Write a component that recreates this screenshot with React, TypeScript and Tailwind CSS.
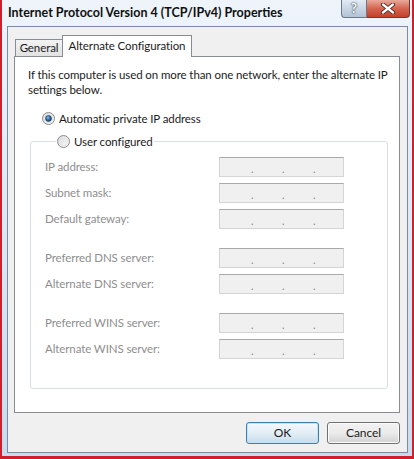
import React from 'react';

const FONT = "font-['Lato','Open_Sans',sans-serif]";

const Radio = ({ checked }: { checked?: boolean }) => (
  <svg width="13" height="13" viewBox="0 0 13 13" className="shrink-0">
    <defs>
      <linearGradient id="rb" x1="0" y1="0" x2="1" y2="1">
        <stop offset="0" stopColor="#d6d6d6" />
        <stop offset="1" stopColor="#ffffff" />
      </linearGradient>
      <radialGradient id="rd" cx="0.4" cy="0.35" r="0.7">
        <stop offset="0" stopColor="#8fc3ee" />
        <stop offset="0.5" stopColor="#2f6ea8" />
        <stop offset="1" stopColor="#1b3e63" />
      </radialGradient>
    </defs>
    <circle cx="6.5" cy="6.5" r="6" fill="url(#rb)" stroke="#8b8b8b" strokeWidth="1" />
    <circle cx="6.5" cy="6.5" r="4.3" fill="none" stroke="#e6e6e6" strokeWidth="1" />
    {checked && <circle cx="6.5" cy="6.5" r="3" fill="url(#rd)" stroke="#1d3550" strokeWidth="0.6" />}
  </svg>
);

const IpBox = () => (
  <div className="w-[125px] h-[20px] bg-[#f0f0f0] border border-[#d4d4d4] border-t-[#a9a9a9] flex items-center pl-[31px] gap-[28px] text-[#8a8a8a] text-[11px] leading-none">
    <span className="w-[3px] mt-[3px]">.</span>
    <span className="w-[3px] mt-[3px]">.</span>
    <span className="w-[3px] mt-[3px]">.</span>
  </div>
);

const Row = ({ label, className = '' }: { label: string; className?: string }) => (
  <div className={`flex items-center h-[20px] ${className}`}>
    <div className="w-[174px] text-[#8e8e8e] whitespace-nowrap">{label}</div>
    <IpBox />
  </div>
);

export default function App() {
  return (
    <div className={`w-[414px] h-[459px] bg-[#cf1f2c] pl-[2px] pr-[2px] pb-[3px] ${FONT} text-[11.5px] tracking-[-0.1px] text-[#1b1b1b]`}>
      <div className="h-full flex flex-col bg-gradient-to-b from-[#eef4fa] via-[#dce8f4] to-[#c9dbee] pl-[5px] pr-[4px] pb-[3px]">
        {/* title bar */}
        <div className="h-[26px] flex items-start justify-between">
          <div className="pt-[5px] pl-[1px] font-bold text-[12.5px] tracking-normal leading-[16px] text-[#101010] whitespace-nowrap">
            Internet Protocol Version 4 (TCP/IPv4) Properties
          </div>
          <div className="flex -mr-[2px]">
            <div className="w-[26px] h-[18px] rounded-bl-[4px] border border-t-0 border-[#6d7785] bg-gradient-to-b from-[#e3ebf4] via-[#c9d6e4] to-[#b3c3d6] flex items-center justify-center text-white font-bold text-[13px] leading-none [text-shadow:0_0_2px_#2b3a4d,0_0_1px_#2b3a4d]">
              ?
            </div>
            <div className="w-[43px] h-[18px] rounded-br-[4px] border border-t-0 border-l-0 border-[#6e3b33] bg-gradient-to-b from-[#e9a99b] via-[#d4644f] to-[#c2402a] flex items-center justify-center">
              <svg width="14" height="11" viewBox="0 0 14 11">
                <path d="M2 1.5 L12 9.5 M12 1.5 L2 9.5" stroke="#3b1a14" strokeWidth="4" strokeLinecap="round" />
                <path d="M2 1.5 L12 9.5 M12 1.5 L2 9.5" stroke="#ffffff" strokeWidth="2.4" strokeLinecap="round" />
              </svg>
            </div>
          </div>
        </div>

        {/* client area */}
        <div className="flex-1 flex flex-col border border-[#7c8ba0] bg-[#f0f0f0] pt-[8px] pl-[6px] pr-[7px] pb-[8px]">
          <div className="flex items-end ml-[1px] h-[21px]">
            <div className="w-[48px] h-[17px] border border-b-0 border-[#898c95] bg-gradient-to-b from-[#f3f3f3] to-[#e2e2e2] flex items-center justify-center leading-none pb-[1px] whitespace-nowrap">
              General
            </div>
            <div className="relative z-10 -ml-px w-[130px] h-[22px] -mb-px border border-b-0 border-[#898c95] bg-white flex items-center justify-center leading-none pb-[2px] whitespace-nowrap">
              Alternate Configuration
            </div>
          </div>
          <div className="h-[357px] border border-[#898c95] bg-white pt-[10px] pl-[13px] pr-[11px] flex flex-col">
            <div className="leading-[15px] whitespace-nowrap">
              If this computer is used on more than one network, enter the alternate IP
              <br />
              settings below.
            </div>
            <div className="flex items-center gap-[4px] h-[15px] mt-[14px] ml-[14px]">
              <Radio checked />
              <span>Automatic private IP address</span>
            </div>
            <fieldset className="ml-[2px] mt-[8px] border border-[#d5dfe5] rounded-[3px] pl-[14px] pt-[8px] pb-[29px]">
              <legend className="ml-[11px] px-[1px] h-[15px] flex items-center gap-[4px]">
                <Radio />
                <span>User configured</span>
              </legend>
              <Row label="IP address:" />
              <Row label="Subnet mask:" className="mt-[6px]" />
              <Row label="Default gateway:" className="mt-[6px]" />
              <Row label="Preferred DNS server:" className="mt-[19px]" />
              <Row label="Alternate DNS server:" className="mt-[6px]" />
              <Row label="Preferred WINS server:" className="mt-[19px]" />
              <Row label="Alternate WINS server:" className="mt-[6px]" />
            </fieldset>
          </div>
          <div className="flex justify-end gap-[8px] mt-[9px]">
            <button className="w-[73px] h-[22px] rounded-[3px] border border-[#3c7fb1] bg-gradient-to-b from-[#f4f9fc] via-[#e3eef6] to-[#c8dcea] shadow-[inset_0_0_0_1px_#bfe4f7] text-[12px] leading-none text-[#1b1b1b]">
              OK
            </button>
            <button className="w-[73px] h-[22px] rounded-[3px] border border-[#707070] bg-gradient-to-b from-[#f2f2f2] via-[#ebebeb] to-[#d2d2d2] shadow-[inset_0_0_0_1px_#fcfcfc] text-[12px] leading-none text-[#1b1b1b]">
              Cancel
            </button>
          </div>
        </div>
      </div>
    </div>
  );
}
